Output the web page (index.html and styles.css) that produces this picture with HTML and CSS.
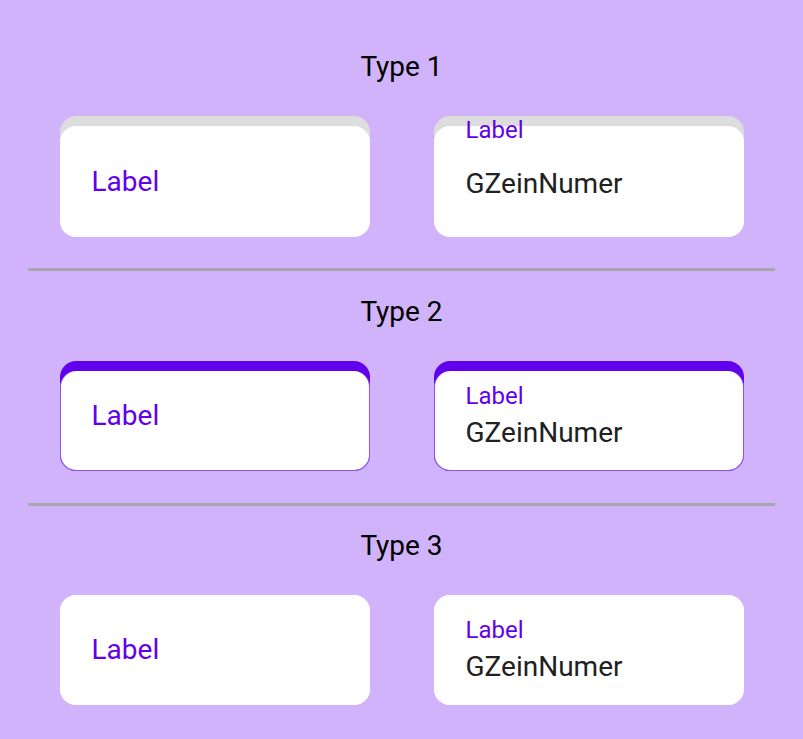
FILE: index.html
```html
<!DOCTYPE html>
<html lang="en">
<head>
<meta charset="utf-8">
<title>Input field types</title>
<link rel="stylesheet" href="styles.css">
</head>
<body>
<main class="page">
  <section class="section">
    <h2 class="title">Type 1</h2>
    <div class="row">
      <div class="field field--grey field--tall">
        <div class="field__body">
          <span class="field__hint">Label</span>
        </div>
      </div>
      <div class="field field--grey field--tall field--filled">
        <span class="field__float">Label</span>
        <div class="field__body field__body--low">
          <span class="field__value">GZeinNumer</span>
        </div>
      </div>
    </div>
  </section>

  <hr class="divider">

  <section class="section">
    <h2 class="title">Type 2</h2>
    <div class="row">
      <div class="field field--accent">
        <div class="field__body field__body--shift">
          <span class="field__hint">Label</span>
        </div>
      </div>
      <div class="field field--accent">
        <div class="field__body field__body--shift">
          <span class="field__label">Label</span>
          <span class="field__value">GZeinNumer</span>
        </div>
      </div>
    </div>
  </section>

  <hr class="divider">

  <section class="section">
    <h2 class="title">Type 3</h2>
    <div class="row">
      <div class="field field--plain">
        <div class="field__body">
          <span class="field__hint">Label</span>
        </div>
      </div>
      <div class="field field--plain">
        <div class="field__body">
          <span class="field__label">Label</span>
          <span class="field__value">GZeinNumer</span>
        </div>
      </div>
    </div>
  </section>
</main>
</body>
</html>
```

FILE: styles.css
```css
* { box-sizing: border-box; }

html, body {
  margin: 0;
  padding: 0;
}

body {
  background: #d1b3fb;
  font-family: Roboto, "Noto Sans", "Liberation Sans", sans-serif;
  width: 803px;
  height: 739px;
  overflow: hidden;
}

.page {
  padding-top: 52px;
  display: flex;
  flex-direction: column;
}

.section {
  display: flex;
  flex-direction: column;
  align-items: center;
}

.title {
  margin: 0 0 34px;
  font-size: 28px;
  line-height: 30px;
  font-weight: 400;
  color: #000;
}

.divider {
  border: 0;
  height: 3px;
  background: #aaa6b0;
  margin: 31px 28px 26px;
  width: auto;
  align-self: stretch;
}

.row {
  display: flex;
  gap: 64px;
  justify-content: center;
}

.field {
  position: relative;
  width: 310px;
  height: 110px;
  border-radius: 16px;
  display: flex;
  flex-direction: column;
}

.field--tall { height: 121px; }

.field--grey {
  background: #dddddd;
  padding-top: 10px;
}

.field--accent {
  background: #6200ee;
  padding-top: 10px;
}

.field--plain { background: #ffffff; }

.field__body {
  flex: 1;
  background: #ffffff;
  border-radius: 16px;
  display: flex;
  flex-direction: column;
  justify-content: center;
  padding-left: 32px;
}

.field--accent .field__body {
  border: 1px solid #8e52ee;
  border-top: 0;
  padding-left: 31px;
}

.field__body--shift { padding-bottom: 10px; }
.field__body--low { padding-top: 4px; }

.field__hint {
  font-size: 28px;
  line-height: 32px;
  color: #6200ee;
}

.field__label {
  font-size: 24px;
  line-height: 26px;
  color: #6200ee;
  margin-bottom: 8px;
}

.field__value {
  font-size: 28px;
  line-height: 32px;
  color: #212121;
}

.field__float {
  position: absolute;
  top: 1px;
  left: 32px;
  font-size: 24px;
  line-height: 26px;
  color: #6200ee;
}

.divider:nth-of-type(2) { margin-top: 32px; margin-bottom: 25px; }
```
